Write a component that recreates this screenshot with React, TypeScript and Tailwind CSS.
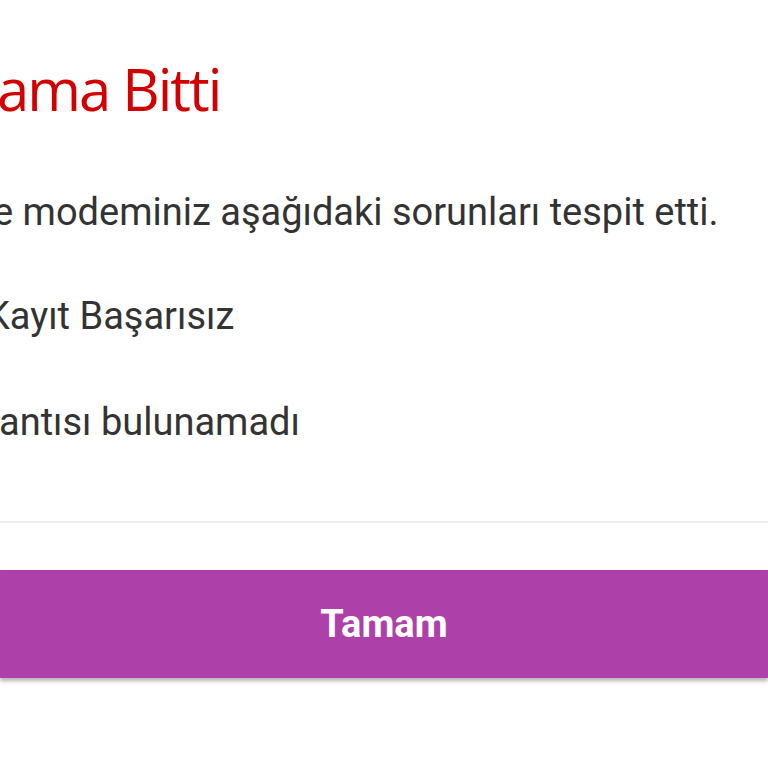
import React from 'react';

export default function App() {
  const lines = [
    { text: 'e modeminiz aşağıdaki sorunları tespit etti.', cls: 'ml-[-7px] pt-[44px]' },
    { text: 'Kayıt Başarısız', cls: 'ml-[-14px] pt-[60px]' },
    { text: 'antısı bulunamadı', cls: 'ml-[-1px] pt-[62px]' },
  ];

  return (
    <div className="w-[768px] h-[768px] bg-white overflow-hidden flex flex-col">
      {/* Title */}
      <div className="h-[146px] pt-[54px]">
        <h1
          className="ml-[-3px] text-[58px] leading-[70px] tracking-[-2px] text-[#d20000] whitespace-nowrap"
          style={{ fontFamily: '"Open Sans", "Noto Sans", sans-serif' }}
        >
          ama Bitti
        </h1>
      </div>

      {/* Problems */}
      <div className="flex flex-col" style={{ fontFamily: 'Roboto, "Noto Sans", sans-serif' }}>
        {lines.map((l) => (
          <div key={l.text} className={l.cls}>
            <p className="text-[38px] leading-[44px] text-[#333333] whitespace-nowrap">{l.text}</p>
          </div>
        ))}
      </div>

      <div className="mt-[77px] h-[2px] bg-[#eeeeee]" />

      <div className="mt-[47px]">
        <button
          className="w-full h-[108px] bg-[#ae40a9] text-white text-[38px] font-bold shadow-[0_3px_4px_rgba(0,0,0,0.3)]"
          style={{ fontFamily: 'Roboto, "Noto Sans", sans-serif' }}
        >
          Tamam
        </button>
      </div>
    </div>
  );
}
